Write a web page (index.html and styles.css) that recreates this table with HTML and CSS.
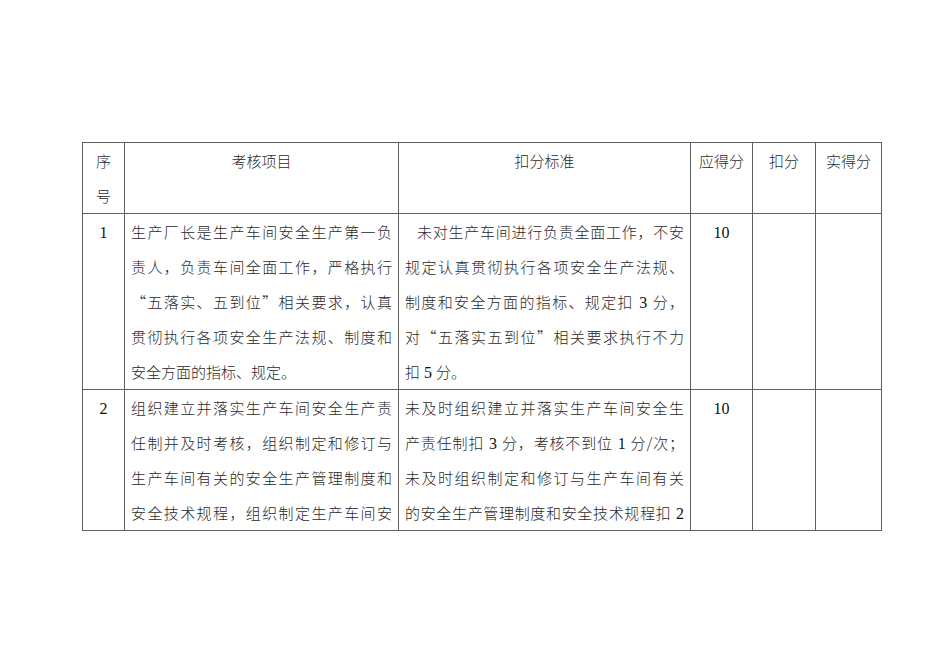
FILE: index.html
```html
<!DOCTYPE html>
<html lang="zh-CN">
<head>
<meta charset="utf-8">
<title>考核表</title>
<link rel="stylesheet" href="styles.css">
</head>
<body>
<div class="page">
  <table class="sheet">
    <colgroup>
      <col class="c0"><col class="c1"><col class="c2"><col class="c3"><col class="c4"><col class="c5">
    </colgroup>
    <tr class="head">
      <td class="ctr"><div class="ln">序</div><div class="ln">号</div></td>
      <td class="ctr"><div class="ln">考核项目</div></td>
      <td class="ctr"><div class="ln">扣分标准</div></td>
      <td class="ctr"><div class="ln">应得分</div></td>
      <td class="ctr"><div class="ln">扣分</div></td>
      <td class="ctr"><div class="ln">实得分</div></td>
    </tr>
    <tr>
      <td class="ctr"><div class="ln"><span class="n">1</span></div></td>
      <td>
        <div class="ln j">生产厂长是生产车间安全生产第一负</div>
        <div class="ln j">责人，负责车间全面工作，严格执行</div>
        <div class="ln j">“五落实、五到位”相关要求，认真</div>
        <div class="ln j">贯彻执行各项安全生产法规、制度和</div>
        <div class="ln">安全方面的指标、规定。</div>
      </td>
      <td>
        <div class="ln j ind">未对生产车间进行负责全面工作，不安</div>
        <div class="ln j">规定认真贯彻执行各项安全生产法规、</div>
        <div class="ln j">制度和安全方面的指标、规定扣<span class="n"> 3 </span>分，</div>
        <div class="ln j">对“五落实五到位”相关要求执行不力</div>
        <div class="ln">扣<span class="n"> 5 </span>分。</div>
      </td>
      <td class="ctr"><div class="ln"><span class="n">10</span></div></td>
      <td></td>
      <td></td>
    </tr>
    <tr>
      <td class="ctr"><div class="ln"><span class="n">2</span></div></td>
      <td>
        <div class="ln j">组织建立并落实生产车间安全生产责</div>
        <div class="ln j">任制并及时考核，组织制定和修订与</div>
        <div class="ln j">生产车间有关的安全生产管理制度和</div>
        <div class="ln j">安全技术规程，组织制定生产车间安</div>
      </td>
      <td>
        <div class="ln j">未及时组织建立并落实生产车间安全生</div>
        <div class="ln j">产责任制扣<span class="n"> 3 </span>分，考核不到位<span class="n"> 1 </span>分/次；</div>
        <div class="ln j">未及时组织制定和修订与生产车间有关</div>
        <div class="ln j">的安全生产管理制度和安全技术规程扣<span class="n"> 2</span></div>
      </td>
      <td class="ctr"><div class="ln"><span class="n">10</span></div></td>
      <td></td>
      <td></td>
    </tr>
  </table>
</div>
</body>
</html>
```
FILE: styles.css
```css
html, body {
  margin: 0;
  padding: 0;
  background: #ffffff;
}
.page {
  width: 950px;
  height: 672px;
  box-sizing: border-box;
  padding: 142px 0 0 82px;
  font-family: "Noto Sans CJK SC", "Liberation Serif", serif;
  font-size: 15px;
  color: #2a2a2a;
}
.sheet {
  border-collapse: collapse;
  table-layout: fixed;
  width: 799px;
}
.c0 { width: 42px; }
.c1 { width: 274px; }
.c2 { width: 292px; }
.c3 { width: 62px; }
.c4 { width: 63px; }
.c5 { width: 66px; }
.sheet td {
  border: 1px solid #5e5e5e;
  padding: 0 6px;
  vertical-align: top;
  font-weight: 300;
  overflow: hidden;
  white-space: nowrap;
}
.ln {
  height: 35px;
  line-height: 35px;
  overflow: visible;
}
.sheet .ctr {
  text-align: center;
  padding-left: 0;
  padding-right: 0;
}
.j {
  text-align: justify;
  text-align-last: justify;
  text-justify: inter-character;
}
.ind {
  padding-left: 12px;
}
.n {
  font-family: "Liberation Serif", serif;
  font-size: 16px;
  font-weight: 400;
  line-height: 1;
  color: #111;
}
```
